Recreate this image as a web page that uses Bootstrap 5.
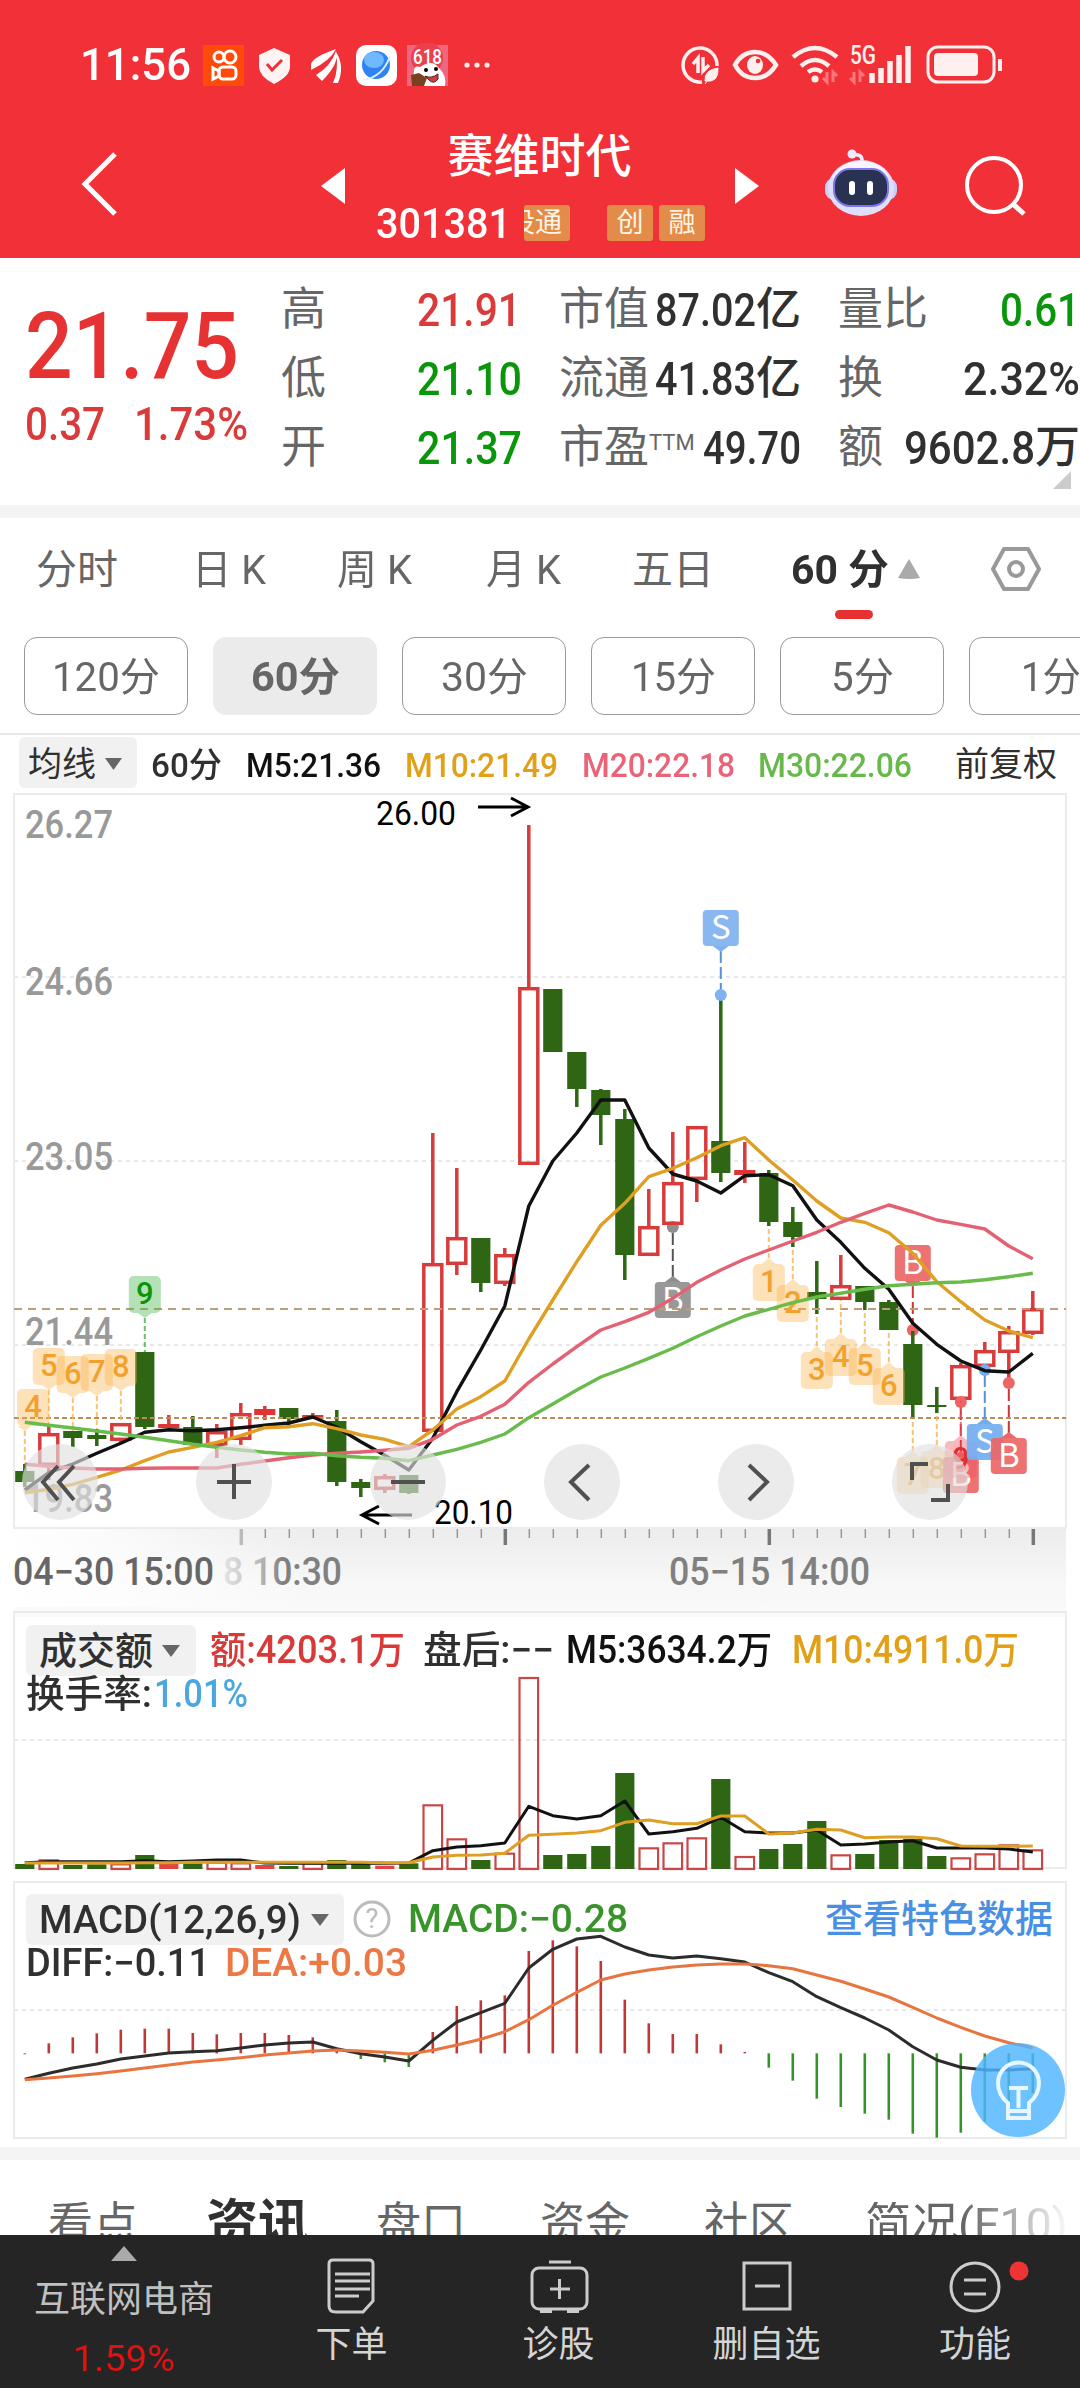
<!DOCTYPE html>
<html lang="zh-CN">
<head>
<meta charset="utf-8">
<meta name="viewport" content="width=device-width, initial-scale=1">
<title>赛维时代 301381</title>
<link href="https://cdn.jsdelivr.net/npm/bootstrap@5.3.0/dist/css/bootstrap.min.css" rel="stylesheet">
<style>
:root{--up:#e03535;--dn:#0a960a;--ink:#303030;--sub:#666}
html,body{overflow:hidden}
body{width:1080px;height:2388px;background:#fff;color:var(--ink);font-family:Roboto,"Noto Sans CJK SC",sans-serif;line-height:1;white-space:nowrap}
svg{display:block}
[data-w]{display:inline-block;transform-origin:0 50%}
.up{color:var(--up)}.dn{color:var(--dn)}
.top-area{height:258px;background:#f13038;color:#fff}
.status{height:130px;padding:0 77px 0 80px}
.clock{font-size:44px;font-weight:500}
.title-row{height:128px;display:grid;grid-template-columns:321px 55px 357px 91px 141px 1fr}
.stock-name{font-size:46px;font-weight:500;height:52px;padding-right:30px}
.code-row{height:76px;padding-top:6px;font-size:43px;font-weight:500}
.flag{width:46px;height:36px;border-radius:3px;background:#e38c4a;color:#fff4e4;font-size:27px;font-weight:400;overflow:hidden}
.quote{height:247px;display:grid;grid-template-columns:281px 278px 279px 242px}
.price{font-size:93px;font-weight:500;color:#e63232;margin:42px 0 0 25px;height:93px}
.chg{font-size:47px;font-weight:500;color:#da3a3a;margin:7px 0 0 25px;display:grid;grid-template-columns:109px 1fr}
.facts{padding-top:17px;font-size:45px}
.fact{height:69px;display:flex;align-items:center;color:var(--sub)}
.fact b{font-weight:500;font-size:47px;color:var(--ink)}
.fact b.up{color:#da3a3a}.fact b.dn{color:var(--dn)}
.fact i{font-style:normal;font-size:45px;font-weight:500;color:var(--ink)}
.fact sup{font-size:22px;top:-13px}
.band{height:13px;background:#f4f4f4}
.period{height:107px;font-size:41px;color:var(--sub);display:grid;grid-template-columns:156px 145px 149px 146px 159px 106px 93px 1fr;padding:32px 0 0 36px;align-items:start}
.pills{height:108px;padding:12px 0 0 24px;gap:25px;overflow:hidden}
.pill{width:164px;height:78px;flex:none;border:1.5px solid #999;border-radius:13px;font-size:40px;color:var(--sub);display:flex;align-items:center;justify-content:center;padding-top:3px}
.pill.on{border-color:#ebebeb;background:#ebebeb;font-weight:700}
.ma-row{height:57px;border-top:2px solid #e8e8e8;font-size:34px;display:grid;grid-template-columns:132px 95px 159px 177px 176px 197px 1fr;padding-left:19px;align-items:center}
.ma-row>[data-w]{font-weight:500;padding-top:4px}
.ma-row>:last-child,.chip{padding-top:2px}
.chip{background:#f1f1f1;border-radius:6px;height:51px}
.panel{position:relative}
.panel>svg{position:absolute;left:0;top:0}
.legend{position:relative;font-size:38px;font-weight:500}
.legend>div{padding-left:26px;display:grid;align-items:center}
.legend .second{margin-top:-18px;height:38px}
.news{height:75px;overflow:hidden;font-size:45px;color:var(--sub);display:grid;grid-template-columns:158px 170px 164px 164px 161px 1fr;padding:42px 0 0 48px}
.fade-r{-webkit-mask-image:linear-gradient(90deg,#000 48%,transparent 100%);mask-image:linear-gradient(90deg,#000 48%,transparent 100%)}
.dock{height:153px;background:#252525;color:#d4d4d4;display:grid;grid-template-columns:248px 207px 207px 209px 208px;font-size:36px}
.dock>div{display:flex;flex-direction:column;align-items:center}
.dock .cap{margin-top:13px}
</style>
</head>
<body>
<header class="top-area">
 <div class="status d-flex align-items-center justify-content-between">
  <div class="d-flex align-items-center">
   <span class="clock" data-w="111">11:56</span>
   <svg class="ms-2" width="296" height="44" viewBox="199 43 296 44">
    <rect x="203" y="45" width="41" height="41" fill="#ff4b0a"/>
    <g fill="none" stroke="#fff" stroke-width="3"><circle cx="219" cy="57" r="5"/><circle cx="230" cy="57" r="6"/><rect x="219" y="67" width="17" height="12" rx="4"/><path d="M213 68l6 3v5l-6 3z"/></g>
    <path d="M274 48l16 7v12q0 9-16 17q-15-8-15-17V55z" fill="#fff3f3"/><path d="M267 64l5 6 10-10" fill="none" stroke="#f13038" stroke-width="3"/>
    <path d="M311 64q2-7 25-15q-6 12-25 21zM316 75q15-9 20-24q4 12-14 30zM333 83q6-13 3-31q9 14 2 31z" fill="#fff"/>
    <rect x="356" y="45" width="41" height="41" rx="10" fill="#fff"/><ellipse cx="376" cy="65" rx="14" ry="14" fill="#2f83f5"/><ellipse cx="374" cy="60" rx="10" ry="8" fill="#70b9ff"/><path d="M363 80q20-3 27-24" stroke="#d9f1ff" stroke-width="2" fill="none"/>
    <rect x="407" y="45" width="41" height="41" fill="#ee6680"/><circle cx="427" cy="58" r="16" fill="#e9404c"/><text x="413" y="64" font-size="20" fill="#fff" font-weight="500" textLength="29" lengthAdjust="spacingAndGlyphs">618</text>
    <path d="M414 71q0-6 6-4q12-8 18 0q9 8 7 19h-33z" fill="#fff"/><circle cx="426" cy="70" r="2"/><circle cx="436" cy="69" r="2"/><path d="M425 76q6 3 13-2v5q-4 6-9 1z" fill="#d93a3a" stroke="#333"/><path d="M411 75l8-2 8 5-3 8h-12z" fill="#79411f"/>
    <g fill="#ffe9e9"><circle cx="467" cy="65" r="2.6"/><circle cx="477" cy="65" r="2.6"/><circle cx="487" cy="65" r="2.6"/></g>
   </svg>
  </div>
  <svg width="322" height="48" viewBox="682 41 322 48" fill="none" stroke="#fff0f0" stroke-width="3.500">
   <path d="M703 82a17 17 0 1 1 15-16"/><path d="M699 73V58l-5 6M704 57v14l6-6"/><path d="M706 81q-1-11 13-13q1 15-13 13zM706 84l5-7" fill="#fff0f0" stroke-width="1"/>
   <path d="M736 65q7-13 20-13t21 13q-8 13-21 13t-20-13z" stroke-width="4.500"/><ellipse cx="756" cy="65" rx="8" ry="9" fill="#fff0f0" stroke="none"/><circle cx="759" cy="61" r="2.300" fill="#f13038" stroke="none"/>
   <path d="M794 57q22-18 44 0M802 66q14-12 28 0M809 72q7-5 14 0" stroke-width="4.5"/><circle cx="816" cy="79" r="3.6" fill="#fff0f0" stroke="none"/>
   <path d="M828 72v10l-4-4M834 82V72l4 4M855 72v10l-4-4M861 82V72l4 4" stroke="#ff777b" stroke-width="3"/>
   <text x="851" y="64" font-size="25" font-weight="500" fill="#fff0f0" stroke="none" textLength="26" lengthAdjust="spacingAndGlyphs">5G</text>
   <path d="M873 83V73M882 83V68M891 83V61M900 83V55M909 83V46" stroke-width="5.5"/>
   <rect x="929" y="47" width="66" height="35" rx="10" stroke-width="3"/><rect x="935" y="53" width="44" height="23" rx="4" fill="#fff0f0" stroke="none"/><path d="M1001 59v12" stroke-width="4"/>
  </svg>
 </div>
 <div class="title-row">
  <svg width="321" height="128" viewBox="0 130 321 128"><path d="M115 154L85 184l30 30" fill="none" stroke="#fff" stroke-width="5"/></svg>
  <svg width="55" height="128" viewBox="321 130 55 128"><path d="M321 186l24-18v36z" fill="#fff"/></svg>
  <div>
   <div class="stock-name d-flex align-items-center justify-content-center">赛维时代</div>
   <div class="code-row d-flex align-items-center">
    <span data-w="135">301381</span>
    <span class="flag d-flex align-items-center justify-content-end pe-2" style="margin-left:13px">设通</span>
    <span class="flag d-flex align-items-center justify-content-center" style="margin-left:37px">创</span>
    <span class="flag d-flex align-items-center justify-content-center" style="margin-left:6px">融</span>
   </div>
  </div>
  <svg width="91" height="128" viewBox="733 130 91 128"><path d="M759 186l-24-18v36z" fill="#fff"/></svg>
  <svg width="141" height="128" viewBox="824 130 141 128">
   <path d="M862 162q1-9-10-7" fill="none" stroke="#f0eaff" stroke-width="3.5"/><circle cx="852" cy="154" r="4.5" fill="#f3eaff"/>
   <rect x="825" y="178" width="72" height="22" rx="9" fill="#c9ceff"/><ellipse cx="861" cy="188" rx="33" ry="28" fill="#dfdffa"/><path d="M832 178q9-17 29-17q20 0 28 16z" fill="#f7f5ff"/>
   <rect x="834" y="169" width="54" height="37" rx="16" fill="#293250" stroke="#7c75ed" stroke-width="2"/><path d="M852 184v8M870 184v8" stroke="#fff" stroke-width="6" stroke-linecap="round"/>
  </svg>
  <svg width="115" height="128" viewBox="965 130 115 128"><circle cx="994" cy="185" r="27" fill="none" stroke="#fff" stroke-width="4"/><path d="M1013 204l11 10" stroke="#fff" stroke-width="5"/></svg>
 </div>
</header>

<section class="quote">
 <div><div class="price"><span data-w="214">21.75</span></div><div class="chg"><span data-w="80">0.37</span><span data-w="114">1.73%</span></div></div>
 <div class="facts">
  <div class="fact"><span style="width:136px">高</span><b class="up" data-w="104">21.91</b></div>
  <div class="fact"><span style="width:136px">低</span><b class="dn" data-w="105">21.10</b></div>
  <div class="fact"><span style="width:136px">开</span><b class="dn" data-w="105">21.37</b></div>
 </div>
 <div class="facts">
  <div class="fact"><span style="width:96px">市值</span><b data-w="101">87.02</b><i>亿</i></div>
  <div class="fact"><span style="width:96px">流通</span><b data-w="101">41.83</b><i>亿</i></div>
  <div class="fact"><span style="width:144px">市盈<sup>TTM</sup></span><b data-w="98">49.70</b></div>
 </div>
 <div class="facts position-relative">
  <div class="fact justify-content-between"><span>量比</span><b class="dn" data-w="80">0.61</b></div>
  <div class="fact justify-content-between"><span>换</span><b data-w="117">2.32%</b></div>
  <div class="fact justify-content-between"><span>额</span><span class="d-flex align-items-center"><b data-w="131">9602.8</b><i>万</i></span></div>
  <svg class="position-absolute" style="right:9px;top:213px" width="18" height="18"><path d="M18 0v18H0z" fill="#ccc"/></svg>
 </div>
</section>
<div class="band"></div>

<nav class="period">
 <span>分时</span><span data-w="74">日 K</span><span data-w="75">周 K</span><span data-w="75">月 K</span><span>五日</span><span class="fw-bold position-relative" style="color:#303030"><span data-w="98">60 分</span><svg class="position-absolute" style="left:44px;top:60px" width="38" height="9"><rect width="38" height="9" rx="4.5" fill="#e83030"/></svg></span>
 <svg width="30" height="40"><path d="M1 28L12 9l11 19q-11 2-22 0z" fill="#aaa"/></svg>
 <svg width="52" height="48" viewBox="992 545 52 48" fill="none" stroke="#999" stroke-width="4" style="margin-top:-5px"><path d="M1006 549h24l11 20-11 20h-24l-11-20z" stroke-linejoin="round"/><circle cx="1018" cy="569" r="7"/></svg>
</nav>
<div class="pills d-flex">
 <span class="pill"><span data-w="108">120分</span></span><span class="pill on"><span data-w="89">60分</span></span><span class="pill"><span data-w="87">30分</span></span><span class="pill"><span data-w="85">15分</span></span><span class="pill"><span data-w="63">5分</span></span><span class="pill"><span data-w="60">1分</span></span>
</div>
<div class="ma-row">
 <span class="chip d-flex align-items-center" style="width:118px;padding-left:9px">均线<svg class="ms-2" width="20" height="16"><path d="M1 2h17L9.5 14z" fill="#666"/></svg></span>
 <span data-w="71">60分</span><span data-w="135" style="color:#111">M5:21.36</span><span data-w="153" style="color:#e2a018">M10:21.49</span><span data-w="153" style="color:#ea6479">M20:22.18</span><span data-w="154" style="color:#66b94a">M30:22.06</span><span>前复权</span>
</div>

<section class="panel" style="height:817px"><svg id="kline" width="1080" height="830" viewBox="0 790 1080 830"></svg></section>
<section class="panel" style="height:269px">
 <svg id="vol" width="1080" height="269" viewBox="0 1607 1080 269"></svg>
 <div class="legend">
  <div style="height:86px;grid-template-columns:184px 213px 143px 226px 1fr">
   <span class="chip d-flex align-items-center" style="width:170px;padding-left:13px">成交额<svg class="ms-2" width="20" height="16"><path d="M1 2h18L10 14z" fill="#666"/></svg></span>
   <span data-w="195" style="color:#d83a3a">额:4203.1万</span><span data-w="131">盘后:−−</span><span data-w="206" style="color:#111">M5:3634.2万</span><span data-w="227" style="color:#e2a018">M10:4911.0万</span>
  </div>
  <div class="second" style="grid-template-columns:128px 1fr"><span data-w="126">换手率:</span><span data-w="94" style="color:#4ba7e0">1.01%</span></div>
 </div>
</section>
<section class="panel" style="height:271px">
 <svg id="macd" width="1080" height="271" viewBox="0 1876 1080 271"></svg>
 <div class="legend">
  <div style="height:86px;grid-template-columns:327px 55px 417px 1fr">
   <span class="chip d-flex align-items-center" style="width:318px;padding-left:13px"><span data-w="262">MACD(12,26,9)</span><svg style="margin-left:9px" width="20" height="16"><path d="M1 2h18L10 14z" fill="#666"/></svg></span>
   <svg width="38" height="38"><circle cx="19" cy="19" r="17" fill="none" stroke="#bbb" stroke-width="3"/><text x="19" y="28" text-anchor="middle" font-size="27" font-weight="400" fill="#bbb">?</text></svg>
   <span data-w="220" style="color:#38932a">MACD:−0.28</span><span style="color:#4a90e2">查看特色数据</span>
  </div>
  <div class="second" style="grid-template-columns:199px 1fr"><span data-w="184">DIFF:−0.11</span><span data-w="182" style="color:#ec7845">DEA:+0.03</span></div>
 </div>
 <svg style="left:968px;top:164px" width="100" height="100" viewBox="968 2040 100 100">
  <circle cx="1018" cy="2090" r="47" fill="#4db4ff" fill-opacity=".82"/>
  <g fill="none" stroke="#e8f7ff" stroke-width="4"><path d="M1008 2111v-8q-10-8-10-20a20 20 0 0 1 41 0q0 12-10 20v8z"/><path d="M1008 2111v7h21v-7M1009 2088h19M1018.500 2088v20"/></g>
 </svg>
</section>
<div class="band"></div>
<nav class="news"><span>看点</span><span class="fw-bold" style="color:#303030;font-size:52px;margin-top:-3px">资讯</span><span>盘口</span><span>资金</span><span>社区</span><span class="fade-r" style="width:206px"><span data-w="203">简况(F10)</span></span></nav>
<footer class="dock">
 <div><svg width="26" height="16" style="margin-top:11px"><path d="M0 15L13 0l13 15z" fill="#aaa"/></svg><span style="margin-top:20px;color:#c0c0c0">互联网电商</span><span data-w="102" style="margin-top:23px;color:#e01212">1.59%</span></div>
 <div><svg width="60" height="60" style="margin-top:19px" viewBox="0 0 60 60" fill="none" stroke="#ccc" stroke-width="3"><path d="M10 6h36q4 0 4 4v37l-10 11H13q-7 0-7-6V10q0-4 4-4z" transform="translate(1 0)"/><path d="M13 20h35M13 27h35M13 35h35M13 42h24"/></svg><span class="cap">下单</span></div>
 <div><svg width="60" height="60" style="margin-top:19px" viewBox="0 0 60 60" fill="none" stroke="#ccc" stroke-width="3"><rect x="3" y="14" width="55" height="41" rx="7"/><path d="M20 8h22M21 35h20M30.500 25v20"/><path d="M11 57h12M38 57h12" stroke-width="4"/></svg><span class="cap">诊股</span></div>
 <div><svg width="60" height="60" style="margin-top:19px" viewBox="0 0 60 60" fill="none" stroke="#ccc" stroke-width="3"><rect x="7" y="9" width="46" height="46"/><path d="M18 32h25"/></svg><span class="cap">删自选</span></div>
 <div><svg width="110" height="60" style="margin-top:19px" viewBox="0 0 110 60" fill="none" stroke="#ccc" stroke-width="3"><circle cx="55" cy="33" r="24"/><path d="M44 26h22M44 40h22"/><circle cx="99" cy="17" r="9.500" fill="#ec3434" stroke="none"/></svg><span class="cap">功能</span></div>
</footer>

<script src="https://cdn.jsdelivr.net/npm/bootstrap@5.3.0/dist/js/bootstrap.bundle.min.js"></script>
<script>
const X=i=>24.8+24*i, RED='#d63c3c', GRN='#2f6613';
const poly=(a,c,w=3.4)=>`<polyline fill="none" stroke="${c}" stroke-width="${w}" stroke-linejoin="round" points="${a.map((y,i)=>X(i)+','+y.toFixed(1)).join(' ')}"/>`;
const dash=(y,c='#e8e8e8',d='4 4')=>`<path d="M14 ${y}H1066" stroke="${c}" stroke-width="2" stroke-dasharray="${d}"/>`;
const frame=(t,b)=>`<rect x="14" y="${t}" width="1052" height="${b-t}" fill="none" stroke="#ebebeb" stroke-width="2"/>`;
const txt=(x,y,s,w,c,f=38,o='')=>`<text x="${x}" y="${y}" font-size="${f}" fill="${c}" textLength="${w}" lengthAdjust="spacingAndGlyphs" ${o}>${s}</text>`;

/* [colour, body top, body bottom, wick top, wick bottom] */
const K=[['g',1471,1482,1464,1487],['r',1433,1466,1424,1480],['g',1431,1438,1431,1447],['g',1435,1439,1429,1446],['r',1423,1441,1423,1443],['g',1352,1427,1352,1429],['f',1424,1428,1415,1428],['g',1427,1445,1416,1445],['r',1431,1446,1424,1458],['r',1413,1440,1403,1445],['f',1409,1415,1406,1420],['g',1408,1419,1408,1426],['f',1415,1419,1413,1419],['g',1421,1482,1410,1486],['g',1482,1488,1479,1497],['r',1476,1490,1474,1493],['g',1475,1493,1475,1494],['r',1263,1432,1133,1432],['r',1237,1265,1168,1275],['g',1238,1283,1238,1292],['r',1254,1284,1248,1286],['r',987,1165,825,1165],['g',989,1052,989,1052],['g',1052,1089,1052,1107],['g',1090,1115,1089,1145],['g',1119,1255,1109,1280],['r',1226,1256,1189,1256],['r',1182,1225,1132,1225],['r',1126,1180,1126,1202],['g',1141,1173,995,1182],['f',1170,1175,1142,1183],['g',1173,1222,1170,1226],['g',1222,1237,1207,1247],['g',1292,1299,1261,1314],['r',1285,1300,1255,1300],['g',1286,1302,1286,1310],['g',1302,1330,1300,1330],['g',1344,1405,1331,1419],['g',1405,1407,1387,1413],['r',1365,1400,1363,1400],['r',1350,1367,1342,1370],['r',1331,1353,1326,1383],['r',1308,1334,1291,1335]];
const at=a=>a.map(v=>1170+v/3);
const M5=at([960,908,882,850,820,787,779,782,779,773,766,759,741,772,815,856,900,805,665,540,408,108,-27,-111,-210,-210,-66,12,33,69,17,14,47,150,217,295,358,460,523,573,602,606,550]);
const M10=at([968,958,943,922,900,872,846,832,817,797,773,770,761,776,795,808,830,780,717,680,633,507,390,275,166,100,20,-5,-37,-73,-97,-30,30,93,144,157,188,250,335,395,450,483,503]);
const M20=at([883,889,894,897,897,895,894,894,894,883,873,863,855,850,846,841,835,808,765,739,703,637,582,530,480,455,427,385,337,300,267,240,213,187,157,130,105,126,150,163,177,228,266]);
const M30=at([757,766,774,783,792,802,812,823,832,840,847,852,850,857,862,865,872,855,838,817,792,743,702,660,621,594,565,535,500,468,438,418,398,381,370,358,347,343,338,336,329,320,310]);

function candle([t,a,b,h,l],i){const x=X(i);
 if(t=='g')return `<path d="M${x} ${h}V${l}" stroke="${GRN}" stroke-width="3.5"/><rect x="${x-9.6}" y="${a}" width="19.2" height="${b-a}" fill="${GRN}"/>`;
 if(t=='f')return `<path d="M${x} ${h}V${l}" stroke="${RED}" stroke-width="3.5"/><rect x="${x-10.6}" y="${a}" width="21.2" height="${b-a}" fill="#e03434"/>`;
 return `<path d="M${x} ${h}V${a}M${x} ${b}V${l}" stroke="${RED}" stroke-width="3.5"/><rect x="${x-9}" y="${a+1.7}" width="18" height="${b-a-3.4}" fill="none" stroke="${RED}" stroke-width="3.5"/>`}
function seq(i,n,top,up,end,c='#fbb450',tc='#f3a02c'){const x=X(i),bx=Math.max(x,33),tip=up?top-6:top+42;
 return `<path d="M${x} ${tip}V${end}" stroke="${c}" stroke-width="2" stroke-dasharray="5 3" opacity=".8"/><g fill="${c}" fill-opacity=".4"><rect x="${bx-16}" y="${top}" width="32" height="37" rx="5"/><path d="${up?`M${x-7} ${top}l7 -6 7 6z`:`M${x-7} ${top+37}l7 5 7-5z`}"/></g><text x="${bx}" y="${top+28}" font-size="31" font-weight="500" fill="${tc}" text-anchor="middle">${n}</text>`}
function mark(i,n,top,up,dot,c,lc){const x=X(i);
 return `<path d="M${x} ${up?top-5:top+41}V${dot}" stroke="${lc}" stroke-width="2" stroke-dasharray="12 4"/><circle cx="${x}" cy="${dot}" r="6" fill="${c}"/><g fill="${c}"><rect x="${x-18}" y="${top}" width="36" height="36" rx="4" fill-opacity=".92"/><path d="${up?`M${x-8} ${top}l8 -6 8 6z`:`M${x-8} ${top+36}l8 6 8-6z`}"/></g><text x="${x}" y="${top+29}" font-size="33" font-family="Noto Sans CJK SC" fill="#fff" text-anchor="middle">${n}</text>`}

let s='<defs><linearGradient id="gv" x2="0" y2="1"><stop offset="0" stop-color="#ececec"/><stop offset=".6" stop-color="#f7f7f7"/><stop offset="1" stop-color="#fafafa"/></linearGradient><linearGradient id="gh"><stop offset="0" stop-color="#fff"/><stop offset=".18" stop-color="#fff" stop-opacity=".7"/><stop offset=".45" stop-color="#fff" stop-opacity="0"/></linearGradient><linearGradient id="g8"><stop offset="0" stop-color="#e4e4e4"/><stop offset=".3" stop-color="#bbb"/><stop offset=".5" stop-color="#808080"/></linearGradient></defs><rect x="14" y="1529" width="1052" height="88" fill="url(#gv)"/><rect x="0" y="1529" width="700" height="90" fill="url(#gh)"/>';
s+=frame(794,1528)+dash(977)+dash(1161)+dash(1345);
[['26.27',838],['24.66',995],['23.05',1170],['21.44',1345],['19.83',1512]].forEach(([t,y])=>s+=txt(25,y,t,88,'#999',38,'font-weight="500"'));
s+=mark(37,'B',1245,false,1330,'#ec6666','#cf3535')+mark(27,'B',1282,true,1227,'#8f8f8f','#555');
K.forEach((k,i)=>s+=candle(k,i));
s+=dash(1309,'#bb9e75','8 6')+dash(1418,'#b98d58','5 3');
s+=seq(0,4,1389,false,1464)+seq(1,5,1348,false,1424)+seq(2,6,1356,false,1431)+seq(3,7,1354,false,1429)+seq(4,8,1349,false,1423)+seq(5,9,1276,false,1352,'#43b548','#0a960a');
s+=seq(31,1,1264,true,1226)+seq(32,2,1285,true,1247)+seq(33,3,1352,true,1314)+seq(34,4,1339,true,1300)+seq(35,5,1348,true,1310)+seq(36,6,1368,true,1330)+seq(37,7,1457,true,1419)+seq(38,8,1451,true,1413);
s+=mark(29,'S',910,false,995,'#7fb2ef','#5593d8')+mark(39,'B',1457,true,1402,'#ec6666','#cf3535')+seq(39,9,1441,true,1400,'#ee5060','#e02d2d')+mark(40,'S',1424,true,1370,'#73adf0','#5593d8')+mark(41,'B',1438,true,1383,'#ec6666','#cf3535');
s+=poly(M5,'#111')+poly(M10,'#df9f22')+poly(M20,'#e46173')+poly(M30,'#69bb4c');
s+=txt(376,825,'26.00',80,'#000',33)+'<path d="M478 807H528M511 798L528 807L511 816" fill="none" stroke="#000" stroke-width="3"/>';
s+=txt(434,1524,'20.10',79,'#000',33)+'<path d="M412 1515H362M379 1506L362 1515L379 1524" fill="none" stroke="#000" stroke-width="3"/>';
const ic=['M-2-16L-17 0L-2 18M14-16L-1 0L14 18','M-17 0H17M0-18V17','M-17 0H17','M7-17L-11 0L7 18','M-7-17L11 0L-7 18','M-2-18H-18V-2M18 2V18H1'];
ic.forEach((d,i)=>s+=`<g transform="translate(${60+174*i} 1482)"><circle r="38" fill="#e0e0e0" fill-opacity=".65"/><path d="${d}" fill="none" stroke="#505050" stroke-width="4"/></g>`);
for(let i=9;i<43;i++){const L=(i-9)%11==0;s+=`<path d="M${X(i)+.5} 1529V${L?1545:1538}" stroke="${i==9?'#bbb':L?'#777':'#999'}" stroke-width="${L?3.5:1.5}"/>`}
s+=txt(13,1585,'04−30 15:00',201,'#666',38,'font-weight="500"')+txt(223,1585,'8 10:30',119,'url(#g8)',38,'font-weight="500"')+txt(669,1585,'05−15 14:00',201,'#808080',38,'font-weight="500"');
kline.innerHTML=s;

const V='g792 r778 g795 g793 r790 g765 f790 g790 r785 r787 f795 g798 r787 g780 g790 f797 g790 r613 r715 g780 r758 r231 g765 g762 g738 g519 r742 r727 r712 g537 r768 g747 g732 g663 r763 g762 g720 g716 g768 r772 r760 r733 r748'.split(' ');
const vt=a=>a.map(v=>1600+v/3);
s='<rect x="14" y="1607" width="1052" height="10" fill="#fafafa"/>'+frame(1612,1868)+dash(1740);
V.forEach((v,i)=>{const t=v[0],y=1600+v.slice(1)/3,x=X(i);s+=t=='r'?`<rect x="${x-9.3}" y="${y+1}" width="18.600" height="${1868-y}" fill="none" stroke="#c84848" stroke-width="2.200"/>`:`<rect x="${x-9.6}" y="${y}" width="19.200" height="${1869-y}" fill="${t=='g'?GRN:'#e04444'}"/>`});
s+=poly(vt([788,785,785,785,785,782,785,783,780,780,789,790,790,790,790,790,789,752,741,737,729,619,647,657,647,603,702,695,685,652,695,699,699,690,735,732,726,722,744,744,744,747,756]),'#111',3);
s+=poly(vt([789,789,789,789,789,788,788,787,787,787,787,787,787,787,787,788,788,771,766,765,760,706,703,699,692,667,660,671,671,648,648,702,699,688,690,713,711,711,716,738,739,739,738]),'#df9f22',3);
vol.innerHTML=s;

const H=[553,520,502,490,479,476,476,489,493,489,489,495,502,540,567,577,591,486,408,391,376,243,211,229,273,389,460,492,492,523,546,593,632,686,711,731,749,791,803,788,755,715,670];
const mt=a=>a.map(v=>1870+v/3);
s=frame(1882,2138)+dash(2010);
H.forEach((v,i)=>s+=`<path d="M${X(i)} ${1870+550/3}V${1870+v/3}" stroke="${v<550?'#c03838':'#38932a'}" stroke-width="2.600"/>`);
s+=poly(mt([628,610,594,582,567,558,549,545,542,534,525,519,516,536,551,561,573,511,456,428,400,294,238,207,199,231,255,264,258,266,276,308,335,380,413,444,480,530,570,592,600,600,596]),'#2c2c2c',3);
s+=poly(mt([629,624,618,611,603,594,585,576,570,563,555,549,543,540,543,547,552,541,525,508,485,449,406,367,330,312,300,291,285,282,282,287,296,315,334,357,381,412,444,472,498,518,534]),'#e8743f',3);
macd.innerHTML=s;

/* condense figures to their column width */
document.querySelectorAll('[data-w]').forEach(e=>{e.style.justifySelf='start';const n=e.getBoundingClientRect().width,w=+e.dataset.w;e.style.transform=`scaleX(${w/n})`;e.style.marginRight=(w-n)+'px'});
</script>
</body>
</html>
